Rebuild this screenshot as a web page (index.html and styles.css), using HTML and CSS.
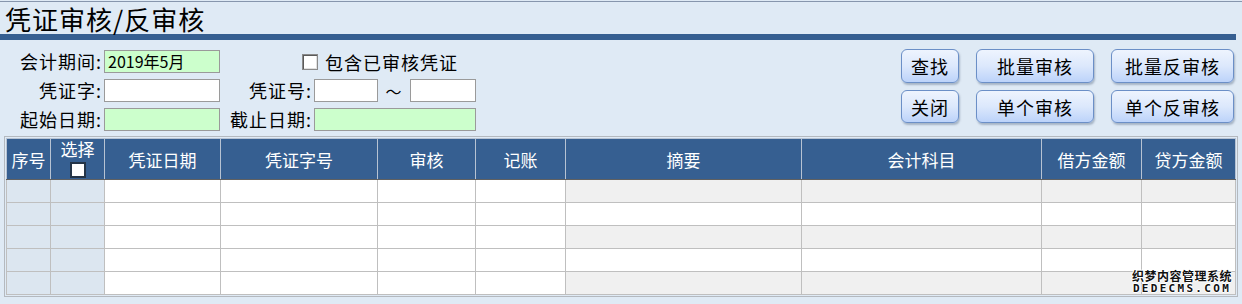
FILE: index.html
```html
<!DOCTYPE html>
<html lang="zh-CN">

<head>
    <meta charset="UTF-8">
    <meta name="viewport" content="width=device-width, initial-scale=1.0">
    <title>凭证审核/反审核</title>
    <link rel="stylesheet" href="styles.css">
</head>

<body>
    <div class="page">
        <h1 class="title">凭证审核/反审核</h1>
        <div class="title-bar"></div>

        <div class="filter">
            <div class="fields">
                <label class="lbl">会计期间:</label>
                <div class="input green">2019年5月</div>
                <div class="check-row">
                    <span class="check"></span>
                    <span>包含已审核凭证</span>
                </div>

                <label class="lbl">凭证字:</label>
                <div class="input"></div>
                <label class="lbl">凭证号:</label>
                <div class="range">
                    <div class="input short"></div>
                    <span class="tilde">～</span>
                    <div class="input short2"></div>
                </div>

                <label class="lbl">起始日期:</label>
                <div class="input green"></div>
                <label class="lbl">截止日期:</label>
                <div class="input green long"></div>
            </div>

            <div class="actions">
                <button class="btn">查找</button>
                <button class="btn">批量审核</button>
                <button class="btn">批量反审核</button>
                <button class="btn">关闭</button>
                <button class="btn">单个审核</button>
                <button class="btn">单个反审核</button>
            </div>
        </div>

        <div class="grid-wrap">
            <table class="grid">
                <colgroup>
                    <col style="width:44px">
                    <col style="width:54px">
                    <col style="width:116px">
                    <col style="width:157px">
                    <col style="width:98px">
                    <col style="width:90px">
                    <col style="width:236px">
                    <col style="width:240px">
                    <col style="width:100px">
                    <col style="width:94px">
                </colgroup>
                <thead>
                    <tr>
                        <th>序号</th>
                        <th class="sel-head"><span>选择</span><span class="head-check"></span></th>
                        <th>凭证日期</th>
                        <th>凭证字号</th>
                        <th>审核</th>
                        <th>记账</th>
                        <th>摘要</th>
                        <th>会计科目</th>
                        <th>借方金额</th>
                        <th>贷方金额</th>
                    </tr>
                </thead>
                <tbody>
                    <tr class="odd">
                        <td class="fixed"></td><td class="fixed"></td><td></td><td></td><td></td><td></td>
                        <td class="alt"></td><td class="alt"></td><td class="alt"></td><td class="alt"></td>
                    </tr>
                    <tr>
                        <td class="fixed"></td><td class="fixed"></td><td></td><td></td><td></td><td></td>
                        <td class="alt"></td><td class="alt"></td><td class="alt"></td><td class="alt"></td>
                    </tr>
                    <tr class="odd">
                        <td class="fixed"></td><td class="fixed"></td><td></td><td></td><td></td><td></td>
                        <td class="alt"></td><td class="alt"></td><td class="alt"></td><td class="alt"></td>
                    </tr>
                    <tr>
                        <td class="fixed"></td><td class="fixed"></td><td></td><td></td><td></td><td></td>
                        <td class="alt"></td><td class="alt"></td><td class="alt"></td><td class="alt"></td>
                    </tr>
                    <tr class="odd">
                        <td class="fixed"></td><td class="fixed"></td><td></td><td></td><td></td><td></td>
                        <td class="alt"></td><td class="alt"></td><td class="alt"></td><td class="alt"></td>
                    </tr>
                </tbody>
            </table>
            <div class="watermark">
                <div class="wm-cn">织梦内容管理系统</div>
                <div class="wm-en">DEDECMS.COM</div>
            </div>
        </div>
    </div>
</body>

</html>
```

FILE: styles.css
```css
body {
    margin: 0;
    padding: 0;
    background-color: #dfeaf5;
    font-family: "Noto Sans CJK SC", "Liberation Sans", sans-serif;
    color: #000;
}

.page {
    margin-top: 1px;
    border-top: 1px solid #8796ad;
    height: 302px;
    overflow: hidden;
}

.title {
    margin: 0;
    padding: 0 0 0 5px;
    height: 32px;
    line-height: 34px;
    font-size: 26px;
    font-weight: normal;
    letter-spacing: 1px;
    white-space: nowrap;
}

.title-bar {
    width: 1236px;
    height: 6px;
    background-color: #365f91;
}

.filter {
    display: flex;
    justify-content: space-between;
    height: 96px;
}

.fields {
    display: grid;
    grid-template-columns: 104px 116px 94px 170px;
    grid-auto-rows: 23px;
    row-gap: 6px;
    margin-top: 10px;
    align-items: center;
    font-size: 18px;
    letter-spacing: 1px;
}

.lbl {
    text-align: right;
    padding-right: 2px;
    white-space: nowrap;
    line-height: 23px;
}

.input {
    box-sizing: border-box;
    height: 23px;
    border: 1px solid #9a9a9a;
    background-color: #fff;
    font-size: 16px;
    letter-spacing: 0;
    line-height: 21px;
    padding-left: 3px;
    white-space: nowrap;
}

.green {
    background-color: #ccffcc;
}

.long {
    width: 162px;
}

.range {
    display: flex;
    align-items: center;
}

.short {
    width: 64px;
}

.short2 {
    width: 66px;
}

.tilde {
    width: 32px;
    text-align: center;
    font-size: 16px;
}

.check-row {
    grid-column: 3 / 5;
    display: flex;
    align-items: center;
    padding-left: 82px;
    white-space: nowrap;
}

.check {
    box-sizing: border-box;
    width: 16px;
    height: 16px;
    margin-right: 7px;
    background-color: #fff;
    border: 1px solid #8a8a8a;
    box-shadow: inset 1px 1px 0 #5a5a5a, inset -1px -1px 0 #e0e0e0;
}

.actions {
    display: grid;
    grid-template-columns: 58px 118px 123px;
    grid-template-rows: 34px 33px;
    column-gap: 17px;
    row-gap: 7px;
    margin-top: 9px;
    margin-right: 8px;
}

.btn {
    font-family: "Noto Sans CJK SC", sans-serif;
    font-size: 18px;
    letter-spacing: 1px;
    color: #000;
    padding: 0;
    border: 1px solid #6b8fc7;
    border-radius: 6px;
    background: linear-gradient(#eef4fe, #dce8fc 50%, #bcd3fa);
    box-shadow: 1px 2px 2px rgba(60, 80, 110, 0.35);
    cursor: pointer;
}

.grid-wrap {
    position: relative;
    margin: 0 4px;
    border: 1px solid #b4b9bf;
    padding: 1px;
}

.grid {
    width: 100%;
    table-layout: fixed;
    border-collapse: collapse;
}

.grid th,
.grid td {
    border: 1px solid #bfbfbf;
    padding: 0;
}

.grid th {
    height: 40px;
    background-color: #365f91;
    color: #fff;
    font-weight: normal;
    font-size: 17px;
    border-color: #b7c3d3;
    border-bottom: 1px solid #606060;
    white-space: nowrap;
}

.sel-head {
    vertical-align: top;
}

.sel-head span {
    display: block;
    line-height: 20px;
}

.grid th .head-check {
    box-sizing: border-box;
    width: 16px;
    height: 16px;
    margin: 3px auto 0;
    background-color: #fff;
    border: 2px solid #243447;
}

.grid td {
    height: 22px;
    background-color: #fff;
}

.grid td.fixed {
    background-color: #dce6f0;
}

.grid tr.odd td.alt {
    background-color: #f0f0f0;
}

.watermark {
    position: absolute;
    right: 5px;
    bottom: 2px;
    text-align: center;
    font-weight: bold;
    color: #111;
    text-shadow: 1px 0 0 #fff, -1px 0 0 #fff, 0 1px 0 #fff, 0 -1px 0 #fff;
}

.wm-cn {
    font-size: 12px;
    line-height: 14px;
    letter-spacing: 0.5px;
}

.wm-en {
    font-family: "DejaVu Sans Mono", monospace;
    font-size: 11px;
    line-height: 11px;
    letter-spacing: 2.3px;
}
```
